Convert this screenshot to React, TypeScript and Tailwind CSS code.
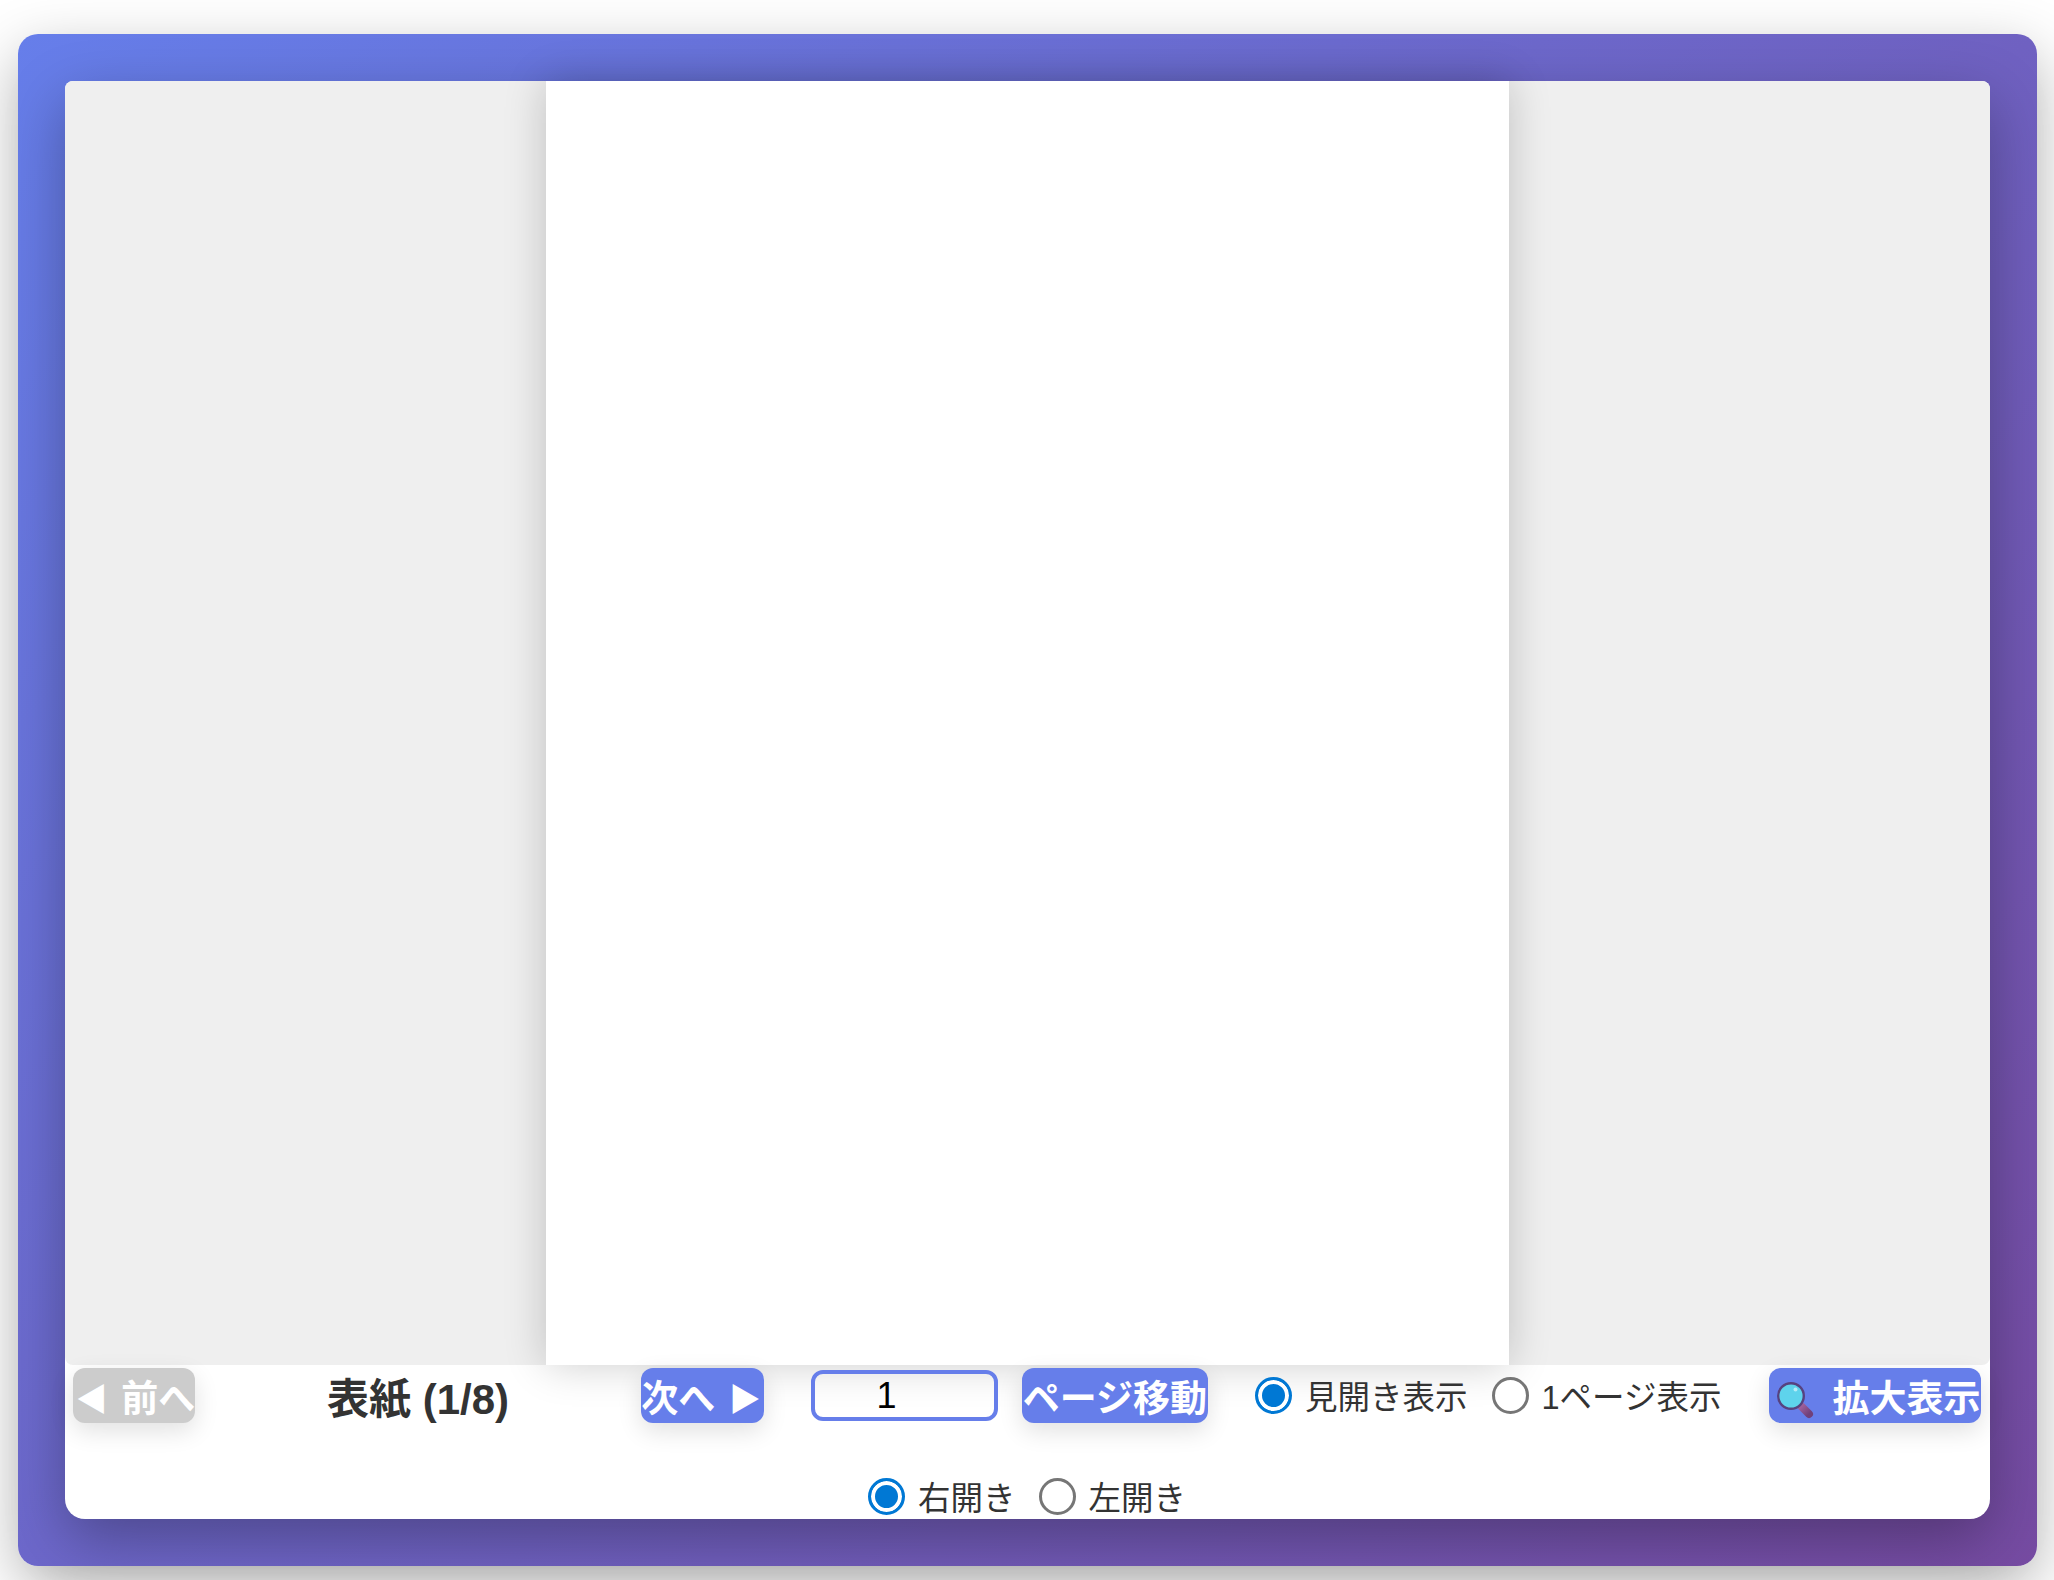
import React from "react";

const font = { fontFamily: '"Liberation Sans","Noto Sans CJK JP",sans-serif' };

function Lens() {
  return (
    <svg width="38" height="38" viewBox="0 0 38 38" className="shrink-0">
      <defs>
        <linearGradient id="h" x1="0" y1="0" x2="1" y2="1">
          <stop offset="0" stopColor="#a0609c" />
          <stop offset="1" stopColor="#70407a" />
        </linearGradient>
      </defs>
      <path d="M25 25 L33 33" stroke="url(#h)" strokeWidth="8" strokeLinecap="round" />
      <circle cx="15" cy="15" r="12.8" fill="#5ed3ec" stroke="#57427f" strokeWidth="2.4" />
      <circle cx="19.5" cy="8.5" r="2" fill="#b5ecf7" />
    </svg>
  );
}

function Radio({ label, checked, name }: { label: string; checked?: boolean; name: string }) {
  return (
    <label className="flex items-center gap-[13px] text-[32.5px] leading-[37px] text-[#333]">
      <input
        type="radio"
        name={name}
        defaultChecked={checked}
        className="m-0 h-[37px] w-[37px] shrink-0 appearance-none rounded-full border-[3px] border-[#767676] bg-white checked:border-[#0078d4] checked:bg-[#0078d4] checked:shadow-[inset_0_0_0_4px_#ffffff]"
      />
      <span className="pt-[6px]">{label}</span>
    </label>
  );
}

const btn =
  "flex h-[55px] shrink-0 items-center justify-center whitespace-nowrap rounded-xl pt-[8px] text-[37px] font-bold text-white shadow-[0_8px_24px_rgba(0,0,0,0.12)]";

export default function App() {
  return (
    <div style={font} className="h-[1580px] bg-white pb-[14px] pl-[18px] pr-[17px] pt-[34px]">
      <div className="h-[1532px] rounded-[20px] bg-[linear-gradient(135deg,#667eea_0%,#764ba2_100%)] p-[47px] shadow-[0_20px_60px_rgba(0,0,0,0.3)]">
        <div className="flex h-[1438px] flex-col rounded-b-[20px] rounded-t-lg bg-white shadow-[0_20px_60px_rgba(0,0,0,0.3)]">
          <div className="flex h-[1284px] shrink-0 justify-center rounded-lg bg-[#efefef]">
            <div className="h-full w-[963px] bg-white shadow-[0_0_40px_rgba(0,0,0,0.2)]" />
          </div>
          <div className="flex items-center gap-[47px] pl-[8px] pt-[3px]">
            <button className={`${btn} w-[122px] bg-[#cccccc] pl-[3px]`}>
              <span className="mr-[3px] text-[32px]">◀</span>&nbsp;前へ
            </button>
            <div className="w-[352px] pt-[8px] text-center text-[42px] font-bold leading-[47px] text-[#333]">表紙 (1/8)</div>
            <button className={`${btn} w-[123px] bg-[#667eea] pr-[3px]`}>
              次へ&nbsp;<span className="ml-[3px] text-[32px]">▶</span>
            </button>
            <div className="flex items-center gap-[24px]">
              <input
                type="text"
                defaultValue="1"
                className="h-[51px] w-[187px] rounded-xl border-[4px] border-[#667eea] pr-[36px] text-center text-[36px] text-black outline-none"
              />
              <button className={`${btn} w-[186px] bg-[#667eea]`}>ページ移動</button>
            </div>
            <div className="mr-[1px] flex items-center gap-[24px]">
              <Radio name="view" label="見開き表示" checked />
              <Radio name="view" label="1ページ表示" />
            </div>
            <button className={`${btn} w-[212px] gap-[18px] bg-[#667eea] pl-[6px]`}>
              <Lens />
              <span>拡大表示</span>
            </button>
          </div>
          <div className="mt-[52px] flex items-center justify-center gap-[23px] pr-[1px]">
            <Radio name="dir" label="右開き" checked />
            <Radio name="dir" label="左開き" />
          </div>
        </div>
      </div>
    </div>
  );
}
